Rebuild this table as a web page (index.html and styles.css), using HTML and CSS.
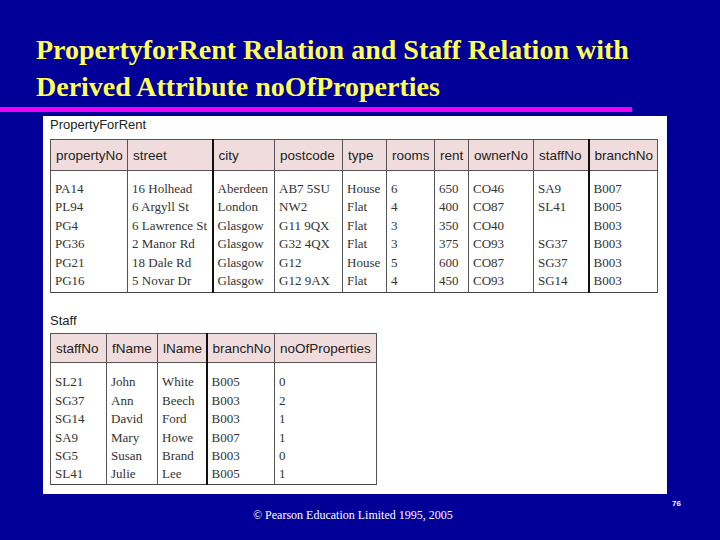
FILE: index.html
```html
<!DOCTYPE html>
<html>
<head>
<meta charset="utf-8">
<title>PropertyForRent and Staff</title>
<link rel="stylesheet" href="styles.css">
</head>
<body>
<div class="slide">
  <h1 class="title">PropertyforRent Relation and Staff Relation with<br>Derived Attribute noOfProperties</h1>
  <div class="rule"></div>
  <div class="panel">
    <div class="label">PropertyForRent</div>
    <table class="rel pfr">
      <thead>
        <tr>
          <th class="w-prop">propertyNo</th>
          <th class="w-street">street</th>
          <th class="w-city thick">city</th>
          <th class="w-post">postcode</th>
          <th class="w-type">type</th>
          <th class="w-rooms">rooms</th>
          <th class="w-rent">rent</th>
          <th class="w-owner">ownerNo</th>
          <th class="w-staff">staffNo</th>
          <th class="w-branch thick">branchNo</th>
        </tr>
      </thead>
      <tbody>
        <tr><td>PA14</td><td>16 Holhead</td><td class="thick">Aberdeen</td><td>AB7 5SU</td><td>House</td><td>6</td><td>650</td><td>CO46</td><td>SA9</td><td class="thick">B007</td></tr>
        <tr><td>PL94</td><td>6 Argyll St</td><td class="thick">London</td><td>NW2</td><td>Flat</td><td>4</td><td>400</td><td>CO87</td><td>SL41</td><td class="thick">B005</td></tr>
        <tr><td>PG4</td><td>6 Lawrence St</td><td class="thick">Glasgow</td><td>G11 9QX</td><td>Flat</td><td>3</td><td>350</td><td>CO40</td><td></td><td class="thick">B003</td></tr>
        <tr><td>PG36</td><td>2 Manor Rd</td><td class="thick">Glasgow</td><td>G32 4QX</td><td>Flat</td><td>3</td><td>375</td><td>CO93</td><td>SG37</td><td class="thick">B003</td></tr>
        <tr><td>PG21</td><td>18 Dale Rd</td><td class="thick">Glasgow</td><td>G12</td><td>House</td><td>5</td><td>600</td><td>CO87</td><td>SG37</td><td class="thick">B003</td></tr>
        <tr><td>PG16</td><td>5 Novar Dr</td><td class="thick">Glasgow</td><td>G12 9AX</td><td>Flat</td><td>4</td><td>450</td><td>CO93</td><td>SG14</td><td class="thick">B003</td></tr>
      </tbody>
    </table>
    <div class="label label-staff">Staff</div>
    <table class="rel staff">
      <thead>
        <tr>
          <th class="s-staff">staffNo</th>
          <th class="s-fname">fName</th>
          <th class="s-lname">lName</th>
          <th class="s-branch thick">branchNo</th>
          <th class="s-nop">noOfProperties</th>
        </tr>
      </thead>
      <tbody>
        <tr><td>SL21</td><td>John</td><td>White</td><td class="thick">B005</td><td>0</td></tr>
        <tr><td>SG37</td><td>Ann</td><td>Beech</td><td class="thick">B003</td><td>2</td></tr>
        <tr><td>SG14</td><td>David</td><td>Ford</td><td class="thick">B003</td><td>1</td></tr>
        <tr><td>SA9</td><td>Mary</td><td>Howe</td><td class="thick">B007</td><td>1</td></tr>
        <tr><td>SG5</td><td>Susan</td><td>Brand</td><td class="thick">B003</td><td>0</td></tr>
        <tr><td>SL41</td><td>Julie</td><td>Lee</td><td class="thick">B005</td><td>1</td></tr>
      </tbody>
    </table>
  </div>
  <div class="footer">
    <div class="copy">© Pearson Education Limited 1995, 2005</div>
    <div class="pageno">76</div>
  </div>
</div>
</body>
</html>
```

FILE: styles.css
```css
html, body {
  margin: 0;
  padding: 0;
}

body {
  width: 720px;
  height: 540px;
  background: #000099;
  overflow: hidden;
}

.slide {
  width: 720px;
  height: 540px;
  display: flex;
  flex-direction: column;
}

.title {
  margin: 0;
  padding: 31px 0 0 36px;
  font-family: "Liberation Serif", "Times New Roman", serif;
  font-weight: bold;
  font-size: 28px;
  line-height: 37px;
  color: #ffff55;
  white-space: nowrap;
}

.rule {
  margin-top: 2px;
  width: 632px;
  height: 5px;
  background: #ee00ee;
  flex: none;
}

.panel {
  margin: 4px 0 0 43px;
  width: 624px;
  height: 378px;
  background: #ffffff;
  box-sizing: border-box;
  padding: 1px 0 0 7px;
  flex: none;
}

.label {
  font-family: "Liberation Sans", Arial, sans-serif;
  font-size: 13px;
  line-height: 16px;
  color: #222222;
}

.label-staff {
  margin-top: 20px;
}

.rel {
  border-collapse: collapse;
  table-layout: fixed;
  border: 1px solid #444444;
}

.pfr {
  width: 608px;
  margin-top: 6px;
}

.staff {
  width: 327px;
  margin-top: 4px;
}

.rel th,
.rel td {
  box-sizing: border-box;
}

.rel th {
  background: #f0dcdc;
  font-family: "Liberation Sans", Arial, sans-serif;
  font-size: 13.5px;
  font-weight: normal;
  color: #222222;
  text-align: left;
  padding: 0 0 0 5px;
  border: 1px solid #555555;
  white-space: nowrap;
  overflow: hidden;
}

.pfr th {
  height: 31px;
}

.staff th {
  height: 29px;
}

.rel td {
  font-family: "Liberation Serif", "Times New Roman", serif;
  font-size: 13px;
  line-height: 18.4px;
  color: #333333;
  padding: 0 0 0 4px;
  border-left: 1px solid #555555;
  border-right: 1px solid #555555;
  white-space: nowrap;
  overflow: hidden;
}

.pfr tbody tr:first-child td {
  padding-top: 9px;
}

.staff tbody tr:first-child td {
  padding-top: 10px;
}

.pfr tbody tr:last-child td {
  padding-bottom: 2px;
}

.rel .thick {
  border-left: 2px solid #111111;
}

.w-prop { width: 77px; }
.w-street { width: 85px; }
.w-city { width: 62px; }
.w-post { width: 68px; }
.w-type { width: 44px; }
.w-rooms { width: 48px; }
.w-rent { width: 34px; }
.w-owner { width: 65px; }
.w-staff { width: 55px; }
.w-branch { width: 69px; }

.s-staff { width: 56px; }
.s-fname { width: 51px; }
.s-lname { width: 49px; }
.s-branch { width: 68px; }
.s-nop { width: 102px; }

.footer {
  flex: 1;
  display: flex;
  align-items: flex-start;
}

.copy {
  margin: 14px 0 0 253px;
  font-family: "Liberation Serif", "Times New Roman", serif;
  font-size: 12px;
  line-height: 14px;
  color: #ffffff;
}

.pageno {
  margin: 5px 39px 0 auto;
  font-family: "Liberation Sans", Arial, sans-serif;
  font-size: 8px;
  font-weight: bold;
  line-height: 10px;
  color: #ffffff;
}
```
